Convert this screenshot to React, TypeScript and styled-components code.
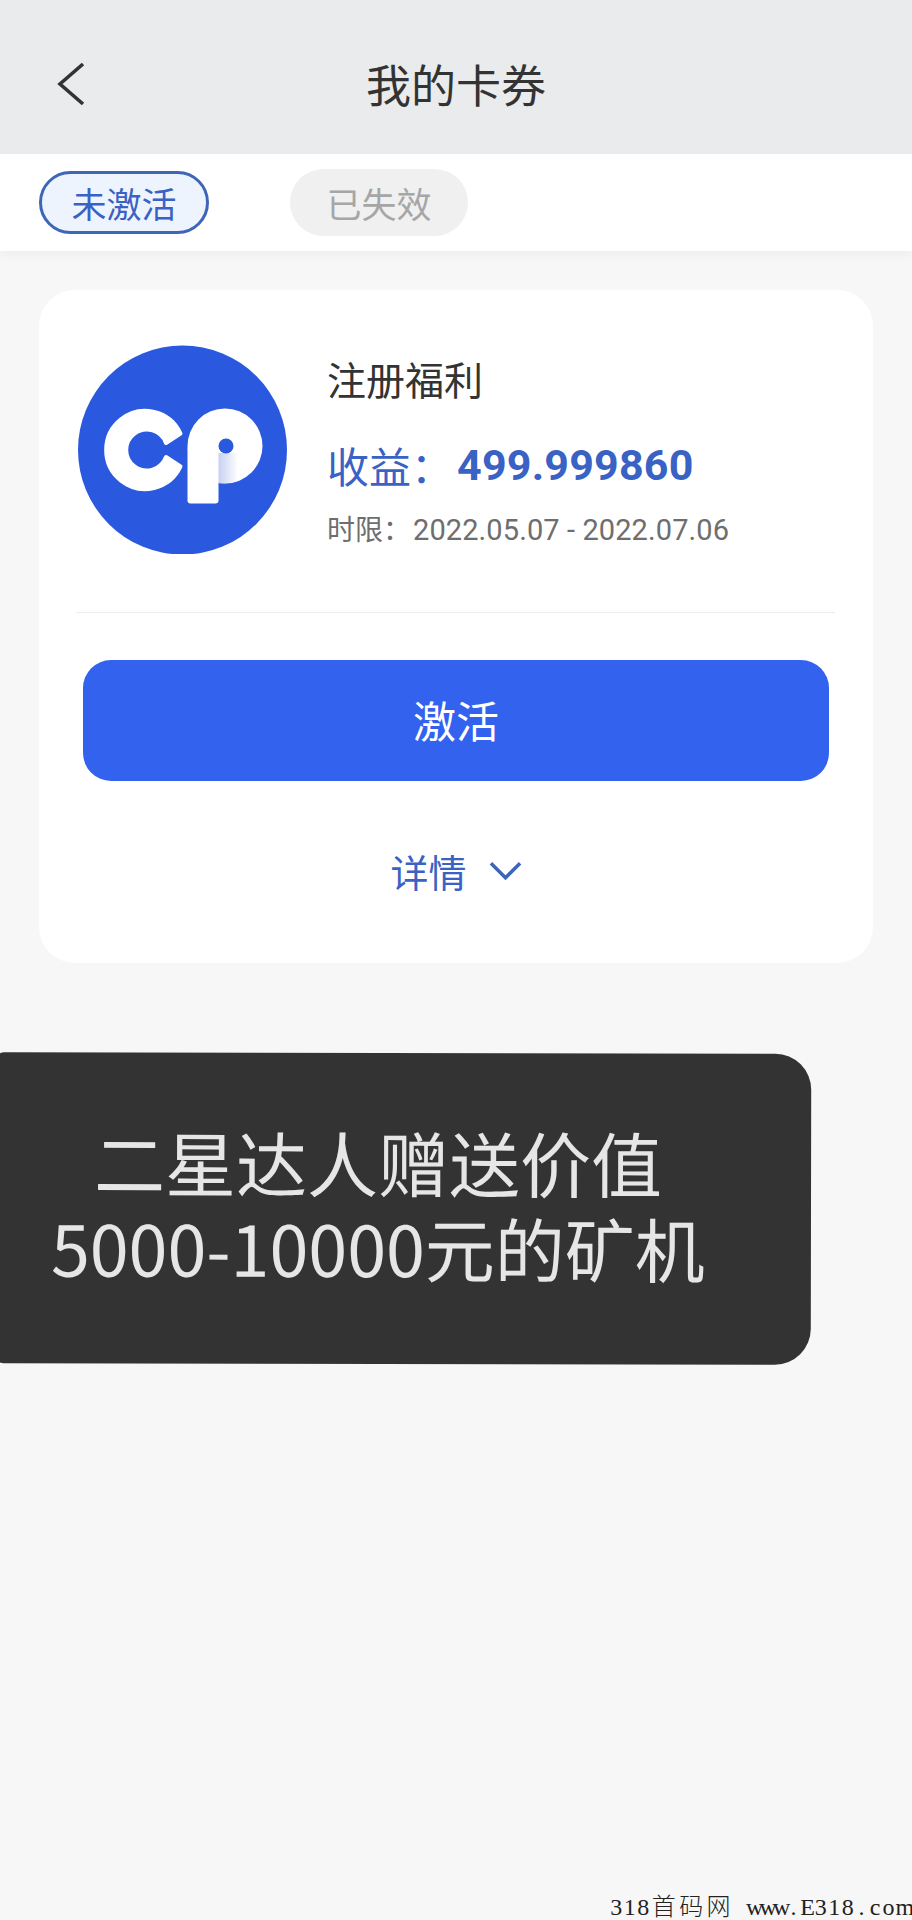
import * as React from 'react';
import styled, { createGlobalStyle } from 'styled-components';

const COLOR = {
  PAGE: '#f7f7f8',
  HEADER: '#e9ebed',
  WHITE: '#ffffff',
  TEXT: '#333333',
  BLUE_TEXT: '#3a62c4',
  BLUE_BUTTON: '#3362ee',
  LOGO: '#2a59e0',
};

const FONT = '"Noto Sans CJK SC", Roboto, sans-serif';

const GlobalStyle = createGlobalStyle`
  html, body {
    margin: 0;
    padding: 0;
    background: ${COLOR.PAGE};
    font-family: ${FONT};
  }
  * {
    box-sizing: border-box;
  }
`;

const Page = styled.div`
  position: relative;
  width: 912px;
  height: 1920px;
  overflow: hidden;
  background: ${COLOR.PAGE};
`;

const Header = styled.header`
  display: grid;
  grid-template-columns: 1fr auto 1fr;
  align-items: center;
  height: 154px;
  padding: 14px 56px 0;
  background: ${COLOR.HEADER};
`;

const BackIcon = styled.svg`
  display: block;
  width: 30px;
  height: 44px;
  fill: none;
  stroke: ${COLOR.TEXT};
  stroke-width: 3.6;
`;

const Title = styled.h1`
  margin: 0;
  font-size: 45px;
  font-weight: 400;
  line-height: 60px;
  color: ${COLOR.TEXT};
`;

const Tabs = styled.nav`
  display: flex;
  align-items: center;
  gap: 81px;
  height: 97px;
  padding-left: 39px;
  background: ${COLOR.WHITE};
  box-shadow: 0 4px 10px rgba(0, 0, 0, 0.04);
`;

const Tab = styled.div<{ $active?: boolean }>`
  display: flex;
  align-items: center;
  justify-content: center;
  width: ${(p) => (p.$active ? '170px' : '178px')};
  height: ${(p) => (p.$active ? '63px' : '67px')};
  border-radius: 34px;
  border: ${(p) => (p.$active ? `3px solid #3d65b8` : 'none')};
  background: ${(p) => (p.$active ? '#eef4fe' : '#f0f0f0')};
  color: ${(p) => (p.$active ? COLOR.BLUE_TEXT : '#a6a6a6')};
  font-size: 35px;
`;

const Card = styled.section`
  width: 834px;
  height: 673px;
  margin: 39px 0 0 39px;
  padding-top: 55px;
  border-radius: 36px;
  background: ${COLOR.WHITE};
`;

const Info = styled.div`
  display: flex;
  gap: 40px;
  padding-left: 39px;
`;

const Logo = styled.svg`
  display: block;
  flex: none;
  width: 209px;
  height: 209px;
`;

const InfoText = styled.div`
  display: flex;
  flex-direction: column;
  padding-top: 8px;
`;

const CardName = styled.div`
  font-size: 39px;
  line-height: 50px;
  color: ${COLOR.TEXT};
`;

const Income = styled.div`
  display: flex;
  margin-top: 32px;
  font-size: 42px;
  line-height: 60px;
  color: ${COLOR.BLUE_TEXT};
`;

const IncomeValue = styled.span`
  margin-left: 4px;
  font-family: Roboto, sans-serif;
  font-weight: 700;
  font-size: 43px;
  letter-spacing: 0.2px;
`;

const Period = styled.div`
  margin-top: 13px;
  font-size: 28px;
  line-height: 40px;
  color: #6e6e6e;
`;

const PeriodDates = styled.span`
  margin-left: 2px;
  font-family: Roboto, sans-serif;
  font-size: 29px;
  letter-spacing: 0.1px;
`;

const Divider = styled.hr`
  width: 759px;
  height: 1px;
  margin: 58px 0 0 37px;
  border: 0;
  background: #ececec;
`;

const ActivateButton = styled.button`
  display: block;
  width: 746px;
  height: 121px;
  margin: 47px 0 0 44px;
  padding: 0 0 3px;
  border: 0;
  border-radius: 28px;
  background: ${COLOR.BLUE_BUTTON};
  color: ${COLOR.WHITE};
  font-family: ${FONT};
  font-size: 43px;
`;

const Details = styled.div`
  display: flex;
  align-items: center;
  justify-content: center;
  gap: 22px;
  margin-top: 65px;
  font-size: 38px;
  line-height: 50px;
  color: ${COLOR.BLUE_TEXT};
`;

const Chevron = styled.svg`
  display: block;
  width: 33px;
  height: 20px;
  fill: none;
  stroke: #3d65b8;
  stroke-width: 3.6;
`;

const Notice = styled.div`
  display: flex;
  flex-direction: column;
  align-items: center;
  justify-content: center;
  width: 817px;
  height: 311px;
  margin: 90px 0 0 -6px;
  padding: 0 49px 9px 0;
  border-radius: 10px 36px 36px 10px;
  background: #333333;
  color: #e6e6e6;
  font-size: 70px;
  line-height: 85px;
  white-space: nowrap;
  transform: rotate(0.1deg);
`;

const NoticeHeadline = styled.div`
  font-size: 71px;
`;

const Watermark = styled.div`
  position: absolute;
  right: 3px;
  bottom: 1px;
  display: flex;
  align-items: baseline;
  height: 28px;
  font-size: 24px;
  line-height: 28px;
  color: #222222;
`;

const WatermarkCell = styled.span<{ $wide?: boolean }>`
  display: inline-block;
  width: ${(p) => (p.$wide ? '27.4px' : '13.6px')};
  text-align: center;
  font-family: ${(p) => (p.$wide ? FONT : '"Liberation Serif", serif')};
  font-weight: ${(p) => (p.$wide ? 300 : 400)};
`;

const CpLogo = () => (
  <Logo viewBox="28 25 209 209">
    <defs>
      <linearGradient id="cp-shade" x1="0" x2="1" y1="0" y2="0">
        <stop offset="0" stopColor="#c6d0f1" />
        <stop offset="1" stopColor="#ffffff" />
      </linearGradient>
    </defs>
    <circle cx="132.5" cy="130" r="104.5" fill={COLOR.LOGO} />
    <path
      d="M130.5 113.5 A39 39 0 1 0 130.5 146.5 L116 137 A20.5 20.5 0 1 1 116 123 Z"
      fill="#fff"
      stroke="#fff"
      strokeWidth="4"
      strokeLinejoin="round"
    />
    <circle cx="175" cy="126" r="37.5" fill="#fff" />
    <rect x="137.5" y="126" width="31" height="57.5" rx="3" fill="#fff" />
    <path d="M168.5 133 H188 V161 Q178 164 168.5 163 Z" fill="url(#cp-shade)" />
    <circle cx="176" cy="126" r="7.5" fill={COLOR.LOGO} />
  </Logo>
);

const WATERMARK = '318首码网 www.E318.com';

const App = () => (
  <Page>
    <GlobalStyle />
    <Header>
      <BackIcon viewBox="0 0 30 44">
        <path d="M27 2 L4 22 L27 42" />
      </BackIcon>
      <Title>我的卡券</Title>
    </Header>
    <Tabs>
      <Tab $active>未激活</Tab>
      <Tab>已失效</Tab>
    </Tabs>
    <Card>
      <Info>
        <CpLogo />
        <InfoText>
          <CardName>注册福利</CardName>
          <Income>
            收益：<IncomeValue>499.999860</IncomeValue>
          </Income>
          <Period>
            时限：<PeriodDates>2022.05.07 - 2022.07.06</PeriodDates>
          </Period>
        </InfoText>
      </Info>
      <Divider />
      <ActivateButton>激活</ActivateButton>
      <Details>
        详情
        <Chevron viewBox="0 0 34 20">
          <path d="M2 2 L17 17 L32 2" />
        </Chevron>
      </Details>
    </Card>
    <Notice>
      <NoticeHeadline>二星达人赠送价值</NoticeHeadline>
      <div>5000-10000元的矿机</div>
    </Notice>
    <Watermark>
      {Array.from(WATERMARK).map((ch, i) => (
        <WatermarkCell key={i} $wide={/[^\x00-\x7f]/.test(ch)}>
          {ch === ' ' ? '\u00a0' : ch}
        </WatermarkCell>
      ))}
    </Watermark>
  </Page>
);

export default App;
